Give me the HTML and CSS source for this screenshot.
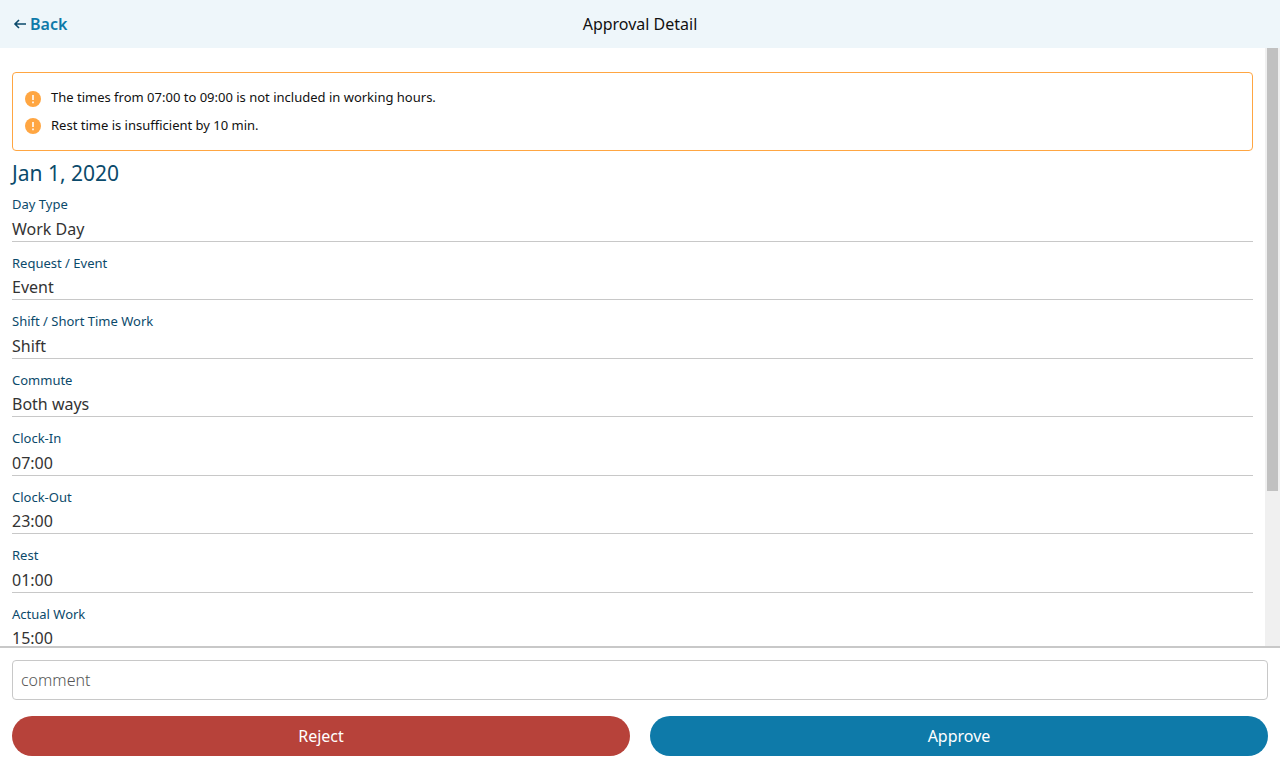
FILE: index.html
```html
<!DOCTYPE html>
<html lang="en">
<head>
<meta charset="utf-8">
<meta name="viewport" content="width=device-width, initial-scale=1">
<title>Approval Detail</title>
<link rel="stylesheet" href="styles.css">
</head>
<body>
<div class="page">
  <header class="navbar">
    <a class="back" href="#">
      <svg class="back-icon" viewBox="0 0 16 16" aria-hidden="true"><path d="M14 8H3M7 4L3 8l4 4"/></svg>
      <span>Back</span>
    </a>
    <h1 class="title">Approval Detail</h1>
  </header>

  <div class="viewport">
    <main class="content">
      <ul class="alert">
        <li class="alert-item">
          <svg class="alert-icon" viewBox="0 0 16 16" aria-hidden="true"><circle cx="8" cy="8" r="8"/><path d="M7.2 4h1.6v5H7.2zM7.2 10.4h1.6v1.8H7.2z"/></svg>
          <span>The times from 07:00 to 09:00 is not included in working hours.</span>
        </li>
        <li class="alert-item">
          <svg class="alert-icon" viewBox="0 0 16 16" aria-hidden="true"><circle cx="8" cy="8" r="8"/><path d="M7.2 4h1.6v5H7.2zM7.2 10.4h1.6v1.8H7.2z"/></svg>
          <span>Rest time is insufficient by 10 min.</span>
        </li>
      </ul>

      <h2 class="date">Jan 1, 2020</h2>

      <dl class="fields">
        <div class="field"><dt>Day Type</dt><dd>Work Day</dd></div>
        <div class="field"><dt>Request / Event</dt><dd>Event</dd></div>
        <div class="field"><dt>Shift / Short Time Work</dt><dd>Shift</dd></div>
        <div class="field"><dt>Commute</dt><dd>Both ways</dd></div>
        <div class="field"><dt>Clock-In</dt><dd>07:00</dd></div>
        <div class="field"><dt>Clock-Out</dt><dd>23:00</dd></div>
        <div class="field"><dt>Rest</dt><dd>01:00</dd></div>
        <div class="field"><dt>Actual Work</dt><dd>15:00</dd></div>
      </dl>
    </main>
    <div class="scrollbar" aria-hidden="true"><div class="scrollbar-thumb"></div></div>
  </div>

  <footer class="footer">
    <input class="comment" type="text" placeholder="comment" aria-label="comment">
    <div class="actions">
      <button class="button reject" type="button">Reject</button>
      <button class="button approve" type="button">Approve</button>
    </div>
  </footer>
</div>
</body>
</html>
```
FILE: styles.css
```css
* {
  box-sizing: border-box;
}

body,
h1,
h2,
ul,
dl,
dd {
  margin: 0;
  padding: 0;
}

body {
  font-family: "Noto Sans", "Open Sans", sans-serif;
  font-size: 16px;
  line-height: 1.5;
  color: #333;
  background: #fff;
}

.page {
  display: flex;
  flex-direction: column;
  height: 100vh;
}

.navbar {
  display: grid;
  grid-template-columns: 1fr auto 1fr;
  align-items: center;
  padding: 12px;
  background: #eef6fa;
}

.back {
  display: flex;
  align-items: center;
  gap: 2px;
  justify-self: start;
  color: #0e7aa9;
  font-weight: 600;
  text-decoration: none;
}

.back-icon {
  width: 16px;
  height: 16px;
  fill: none;
  stroke: #0b4a6b;
  stroke-width: 1.6;
}

.title {
  font-size: 16px;
  font-weight: 400;
  color: #111;
}

.viewport {
  display: flex;
  flex: 1;
  min-height: 0;
}

.content {
  flex: 1;
  overflow-y: auto;
  scrollbar-width: none;
  padding: 24px 12px;
}

.scrollbar {
  width: 15px;
  padding: 0 2px;
  background: #f0f0f0;
}

.scrollbar-thumb {
  height: 74%;
  background: #c1c1c1;
}

.alert {
  display: flex;
  flex-direction: column;
  gap: 8px;
  padding: 15px 12px;
  border: 1px solid #ffa642;
  border-radius: 4px;
  list-style: none;
  font-size: 13px;
  color: #111;
}

.alert-item {
  display: flex;
  align-items: center;
  gap: 10px;
}

.alert-icon {
  width: 16px;
  height: 16px;
  margin-top: 2px;
}

.alert-icon circle {
  fill: #ffa642;
}

.alert-icon path {
  fill: #fff;
}

.date {
  margin: 7px 0;
  font-size: 21px;
  line-height: 30px;
  font-weight: 400;
  color: #0b4a6b;
}

.field {
  margin-bottom: 12px;
  border-bottom: 1px solid #c8c8c8;
}

.field dt {
  margin-bottom: 2px;
  font-size: 13px;
  color: #0b4a6b;
}

.footer {
  padding: 12px;
  border-top: 2px solid #c8c8c8;
}

.comment {
  display: block;
  width: 100%;
  height: 40px;
  padding: 0 8px;
  border: 1px solid #c8c8c8;
  border-radius: 4px;
  background: #fff;
  font: inherit;
  color: #333;
}

.comment::placeholder {
  color: #555;
  font-weight: 300;
}

.actions {
  display: grid;
  grid-template-columns: 1fr 1fr;
  gap: 20px;
  margin-top: 16px;
}

.button {
  height: 40px;
  border: 0;
  border-radius: 20px;
  font: inherit;
  color: #fff;
}

.reject {
  background: #b7423a;
}

.approve {
  background: #0e7aa9;
}
```
